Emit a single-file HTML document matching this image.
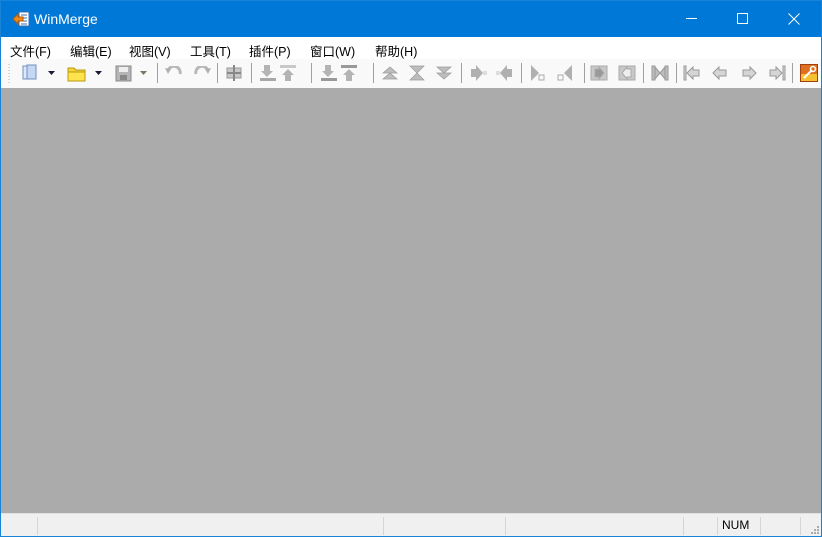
<!DOCTYPE html>
<html><head><meta charset="utf-8"><style>
*{margin:0;padding:0;box-sizing:border-box}
body{width:822px;height:537px;overflow:hidden;background:#fff;font-family:"Liberation Sans","Noto Sans CJK SC",sans-serif;position:relative}
#win{position:absolute;left:0;top:0;width:822px;height:537px;border:1px solid #1883d7;}
#title{position:absolute;left:0;top:0;width:820px;height:36px;background:#0078d7;color:#fff}
#title .t{position:absolute;left:33px;top:10px;font-size:14px}
#menu{position:absolute;left:0;top:36px;width:820px;height:22px;background:#fff;font-size:12.5px;color:#000}
#menu span{position:absolute;top:4px}
#tb{position:absolute;left:0;top:58px;width:820px;height:29px;background:#f9f9f9}
#main{position:absolute;left:0;top:87px;width:820px;height:425px;background:#ababab}
#status{position:absolute;left:0;top:512px;width:820px;height:23px;background:#f0f0f0;border-top:1px solid #e0e0e0}
.sep{position:absolute;top:4px;width:1px;height:20px;background:#a0a0a0}
.ss{position:absolute;top:3px;width:1px;height:18px;background:#d5d5d5}
svg{position:absolute}
</style></head><body><div id="win">
<div id="title">
<svg style="left:11px;top:10px" width="18" height="16" viewBox="0 0 18 16"><rect x="7" y="1" width="10" height="14" fill="#fff" stroke="#3a6fb0"/><path d="M9 4h6M9 7h6M9 10h6M9 13h6" stroke="#3a6fb0"/><path d="M1 8l5-5v3h5v4H6v3z" fill="#f08a1c" stroke="#b55a00"/></svg>
<span class="t">WinMerge</span>
<svg style="left:685px;top:17px" width="12" height="2"><rect width="11" height="1" fill="#fff"/></svg>
<svg style="left:736px;top:12px" width="12" height="12"><rect x="0.5" y="0.5" width="10" height="10" fill="none" stroke="#fff"/></svg>
<svg style="left:787px;top:12px" width="12" height="12"><path d="M0.5 0.5l11 11M11.5 0.5l-11 11" stroke="#fff"/></svg>
</div>
<div id="menu"><span style="left:9px">文件(F)</span><span style="left:69px">编辑(E)</span><span style="left:128px">视图(V)</span><span style="left:189px">工具(T)</span><span style="left:248px">插件(P)</span><span style="left:309px">窗口(W)</span><span style="left:374px">帮助(H)</span></div>
<div id="tb">
<svg style="left:7px;top:4px" width="3" height="22"><path d="M1 1v20" stroke="#b0b0b0" stroke-dasharray="1 2"/></svg>
<svg style="left:20px;top:5px" width="18" height="18"><rect x="2" y="2" width="10" height="13" fill="#dde8f8" stroke="#6f8fc0"/><rect x="6" y="1" width="9" height="14" fill="#c6d7f3" stroke="#6f8fc0"/></svg>
<svg style="left:47px;top:12px" width="8" height="5"><path d="M0 0h7l-3.5 4z" fill="#1a1a3a"/></svg>
<svg style="left:66px;top:6px" width="20" height="17"><path d="M1 3h6l2 2h9v11H1z" fill="#f5d23a" stroke="#b89a10"/><rect x="1" y="7" width="17" height="9" fill="#ffe34d" stroke="#b89a10"/></svg>
<svg style="left:94px;top:12px" width="8" height="5"><path d="M0 0h7l-3.5 4z" fill="#1a1a3a"/></svg>
<svg style="left:114px;top:6px" width="17" height="17"><rect x="1" y="1" width="15" height="15" fill="#b5b5b5" stroke="#8a8a8a"/><rect x="4" y="2" width="9" height="5" fill="#eee"/><rect x="5" y="10" width="7" height="5" fill="#888"/></svg>
<svg style="left:139px;top:12px" width="8" height="5"><path d="M0 0h7l-3.5 4z" fill="#777760"/></svg>
<div class="sep" style="left:156px"></div>
<svg style="left:164px;top:7px" width="18" height="14"><path d="M3 5a6 6 0 0 1 12 3" fill="none" stroke="#b8b8b8" stroke-width="3"/><path d="M0 2l6 1-3 5z" fill="#b0b0b0"/></svg>
<svg style="left:192px;top:7px" width="18" height="14"><path d="M15 5a6 6 0 0 0-12 3" fill="none" stroke="#b8b8b8" stroke-width="3"/><path d="M18 2l-6 1 3 5z" fill="#b0b0b0"/></svg>
<div class="sep" style="left:216px"></div>
<svg style="left:224px;top:5px" width="18" height="18"><rect x="2" y="4" width="14" height="10" fill="#c8c8c8" stroke="#999"/><path d="M9 1v16M2 9h14" stroke="#888" stroke-width="2"/></svg>
<div class="sep" style="left:250px"></div>
<svg style="left:258px;top:5px" width="100" height="18">
<g fill="#b4b4b4"><path d="M5 1h6v6h3l-6 6-6-6h3z"/><rect x="1" y="14" width="16" height="3" fill="#a8a8a8"/>
<path d="M32 17h-6v-6h-3l6-6 6 6h-3z"/><rect x="21" y="1" width="16" height="3" fill="#c8c8c8"/>
<path d="M66 1h6v6h3l-6 6-6-6h3z"/><rect x="62" y="14" width="16" height="3" fill="#999"/>
<path d="M93 17h-6v-6h-3l6-6 6 6h-3z"/><rect x="82" y="1" width="16" height="3" fill="#999"/></g></svg>
<div class="sep" style="left:310px"></div>
<div class="sep" style="left:372px"></div>
<svg style="left:380px;top:5px" width="75" height="18"><g fill="#bdbdbd" stroke="#999" stroke-width=".7"><path d="M2 9l7-6 7 6zM2 15l7-6 7 6z"/><path d="M29 2h14l-7 7zM29 16h14l-7-7z"/><path d="M56 3h14l-7 6zM56 9h14l-7 6z"/></g></svg>
<div class="sep" style="left:460px"></div>
<svg style="left:468px;top:5px" width="45" height="18"><g fill="#b0b0b0"><path d="M2 5h5V1l7 8-7 8v-4H2z"/><rect x="14" y="7" width="4" height="4" fill="#ddd"/><path d="M43 5h-5V1l-7 8 7 8v-4h5z"/><rect x="27" y="7" width="4" height="4" fill="#ddd"/></g></svg>
<div class="sep" style="left:520px"></div>
<svg style="left:528px;top:5px" width="45" height="18"><g fill="#b0b0b0"><path d="M2 1l8 8-8 8z"/><rect x="10" y="11" width="5" height="5" fill="none" stroke="#aaa"/><path d="M43 1l-8 8 8 8z"/><rect x="29" y="11" width="5" height="5" fill="none" stroke="#aaa"/></g></svg>
<div class="sep" style="left:583px"></div>
<svg style="left:589px;top:5px" width="48" height="18"><g fill="#c8c8c8" stroke="#aaa"><rect x="1" y="2" width="16" height="14"/><path d="M5 5h4V3l5 6-5 6v-2H5z" fill="#999"/><rect x="29" y="2" width="16" height="14"/><path d="M41 5h-4V3l-5 6 5 6v-2h4z" fill="#eee"/></g></svg>
<div class="sep" style="left:642px"></div>
<svg style="left:650px;top:5px" width="18" height="18"><g fill="#bdbdbd" stroke="#999"><rect x="1" y="2" width="3" height="14"/><rect x="14" y="2" width="3" height="14"/><path d="M4 3l5 6-5 6zM14 3l-5 6 5 6z"/></g></svg>
<div class="sep" style="left:675px"></div>
<svg style="left:682px;top:5px" width="18" height="18"><g fill="#d5d5d5" stroke="#999"><rect x="1" y="2" width="2" height="14"/><path d="M4 9l6-6v3h6v6h-6v3z"/></g></svg>
<svg style="left:710px;top:5px" width="18" height="18"><g fill="#d5d5d5" stroke="#999"><path d="M2 9l6-6v3h7v6H8v3z"/></g></svg>
<svg style="left:739px;top:5px" width="18" height="18"><g fill="#d5d5d5" stroke="#999"><path d="M16 9l-6-6v3H3v6h7v3z"/></g></svg>
<svg style="left:767px;top:5px" width="18" height="18"><g fill="#d5d5d5" stroke="#999"><path d="M14 9L8 3v3H2v6h6v3z"/><rect x="15" y="2" width="2" height="14"/></g></svg>
<div class="sep" style="left:791px"></div>
<svg style="left:799px;top:5px" width="18" height="18"><rect x="0.5" y="0.5" width="17" height="17" fill="#e07020" stroke="#a04010"/><rect x="1" y="10" width="16" height="7" fill="#f5c030"/><path d="M4 14l8-8" stroke="#fff" stroke-width="2"/><circle cx="13" cy="5" r="2.5" fill="none" stroke="#fff" stroke-width="1.5"/></svg>
</div>
<div id="main"></div>
<div id="status">
<div class="ss" style="left:36px"></div><div class="ss" style="left:382px"></div><div class="ss" style="left:504px"></div><div class="ss" style="left:682px"></div><div class="ss" style="left:716px"></div><div class="ss" style="left:759px"></div><div class="ss" style="left:799px"></div>
<span style="position:absolute;left:721px;top:4px;font-size:12px">NUM</span>
<svg style="left:810px;top:12px" width="9" height="9"><g fill="#aaa"><rect x="6" y="0" width="2" height="2"/><rect x="3" y="3" width="2" height="2"/><rect x="6" y="3" width="2" height="2"/><rect x="0" y="6" width="2" height="2"/><rect x="3" y="6" width="2" height="2"/><rect x="6" y="6" width="2" height="2"/></g></svg>
</div>
</div></body></html>
